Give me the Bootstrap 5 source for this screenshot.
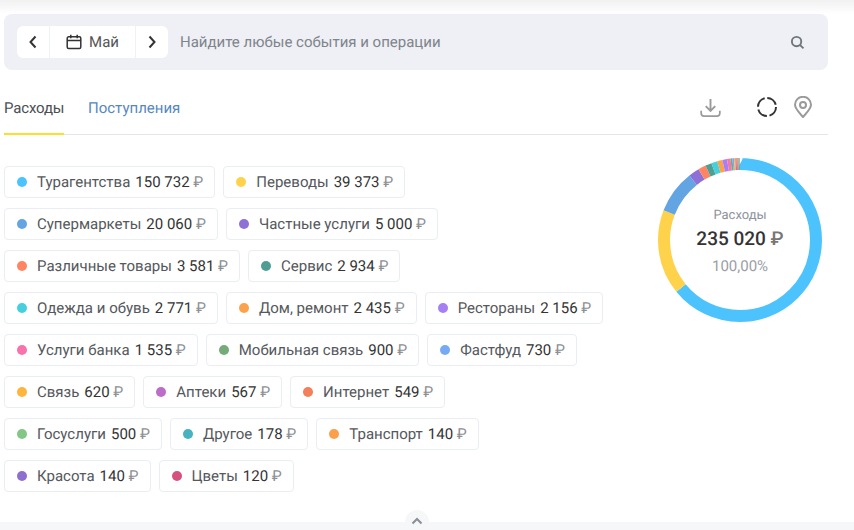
<!DOCTYPE html>
<html lang="ru">
<head>
<meta charset="utf-8">
<title>Расходы</title>
<link href="https://cdn.jsdelivr.net/npm/bootstrap@5.3.0/dist/css/bootstrap.min.css" rel="stylesheet">
<style>
html,body{height:530px;overflow:hidden;background:#fff;}
body{font-family:Roboto,"Liberation Sans",sans-serif;font-size:15px;color:#333;text-rendering:geometricPrecision;font-kerning:normal;}
.top-fade{height:14px;background:linear-gradient(#f1f1f2,#fff);}
.page-wrap{padding:0 26px 0 4px;}
.search-bar{height:56px;background:#eef0f5;border-radius:8px;padding:0 13px;}
.month-group{height:32px;background:#fff;border-radius:6px;width:151px;flex:none;}
.month-arrow{width:32px;height:32px;padding:0;border:0;background:none;color:#333;}
.month-name{width:87px;height:32px;border-left:1px solid #f0f1f4;border-right:1px solid #f0f1f4;color:#555;gap:7px;}
.search-text{margin-left:12px;color:#80848b;font-size:15px;}
.search-ico{margin-right:10px;}
.tab-row{height:65px;border-bottom:1px solid #e5e5e5;margin-bottom:31px;}
.tab-item{height:65px;line-height:77px;text-decoration:none;color:#4b4f54;font-size:15px;position:relative;}
.tab-active{width:60px;border-bottom:2px solid #ffdd2d;margin-right:24px;height:65px;letter-spacing:-.15px;}
.tab-link{color:#5688c0;}
.tool-set{padding-top:10px;}
.ico-dl{margin-right:35px;}
.ico-ring{margin-right:15px;}
.ico-pin{margin-right:15px;}
.chip-area{width:603px;gap:10px 8px;align-content:flex-start;flex:none;}
.chip-item{height:32px;padding:0 11px 0 12px;border:1px solid #e9edf4;border-radius:4px;background:#fff;white-space:nowrap;color:#55585c;gap:10px;}
.chip-dot{width:10px;height:10px;border-radius:50%;flex:none;}
.chip-sum{color:#333;margin-left:5px;font-weight:400;}
.rub{color:#8d9094;}
.donut-box{width:164px;height:164px;margin:-8px 0 0 51px;flex:none;}
.donut-box svg{display:block;}
.donut-center{position:absolute;inset:0;text-align:center;}
.donut-label{font-size:13px;color:#8e939b;line-height:16px;margin-top:50px;}
.donut-sum{font-size:19px;font-weight:500;color:#333;line-height:24px;margin-top:3px;}
.donut-sum span{color:#777;}
.donut-pct{font-size:15px;color:#9a9ea5;line-height:18px;margin-top:6px;}
.bottom-strip{height:8px;background:#f6f7f8;margin-top:30px;position:relative;}
.bump{position:absolute;left:405px;top:-12px;width:24px;height:24px;border-radius:50%;background:#f6f7f8;}
.bump svg{display:block;margin:7px auto 0;}
</style>
</head>
<body>
<div class="top-fade"></div>
<div class="page-wrap">
  <div class="search-bar d-flex align-items-center">
    <div class="month-group d-flex align-items-center">
      <button class="month-arrow d-flex align-items-center justify-content-center" type="button" aria-label="Назад">
        <svg width="10" height="14" viewBox="0 0 10 14"><path d="M7.5 1.5 2.5 7l5 5.5" fill="none" stroke="#333" stroke-width="2"/></svg>
      </button>
      <div class="month-name d-flex align-items-center justify-content-center">
        <svg width="16" height="16" viewBox="0 0 16 16" fill="none" stroke="#333" stroke-width="1.5"><rect x="1.2" y="2.8" width="13.6" height="11.6" rx="1.5"/><path d="M1.2 6.6h13.6M4.8 .8v3.4M11.2 .8v3.4"/></svg>
        <span>Май</span>
      </div>
      <button class="month-arrow d-flex align-items-center justify-content-center" type="button" aria-label="Вперёд">
        <svg width="10" height="14" viewBox="0 0 10 14"><path d="M2.5 1.5 7.5 7l-5 5.5" fill="none" stroke="#333" stroke-width="2"/></svg>
      </button>
    </div>
    <div class="search-text flex-grow-1">Найдите любые события и операции</div>
    <svg class="search-ico" width="15" height="15" viewBox="0 0 16 16" fill="none" stroke="#70757d" stroke-width="2"><circle cx="7" cy="7" r="5"/><path d="m10.800 10.800 3.600 3.400"/></svg>
  </div>

  <div class="tab-row d-flex justify-content-between">
    <div class="d-flex">
      <a class="tab-item tab-active" href="#">Расходы</a>
      <a class="tab-item tab-link" href="#">Поступления</a>
    </div>
    <div class="tool-set d-flex align-items-center">
      <svg class="ico-dl" width="21" height="19" viewBox="0 0 22 20" fill="none" stroke="#9a9a9a" stroke-width="2"><path d="M11 1v12M6 8.500l5 5 5-5"/><path d="M1.200 13.500v2.500a3 3 0 0 0 3 3h13.600a3 3 0 0 0 3-3v-2.500" stroke-width="1.800"/></svg>
      <svg class="ico-ring" width="22" height="22" viewBox="0 0 22 22" fill="none" stroke="#333" stroke-width="2"><circle cx="11" cy="11" r="9" stroke-dasharray="11.500 2.640"/></svg>
      <svg class="ico-pin" width="20" height="22" viewBox="0 0 20 22" fill="none" stroke="#9a9a9a" stroke-width="2"><path d="M10 21C5.500 16 2 12.700 2 8.800A8 8 0 0 1 18 8.800C18 12.700 14.500 16 10 21Z"/><circle cx="10" cy="9" r="3"/></svg>
    </div>
  </div>

  <div class="d-flex">
    <div class="chip-area d-flex flex-wrap">
      <div class="chip-item d-flex align-items-center"><i class="chip-dot" style="background:#4cc3fc"></i><span>Турагентства<span class="chip-sum">150 732 <span class="rub">₽</span></span></span></div>
      <div class="chip-item d-flex align-items-center"><i class="chip-dot" style="background:#ffd24c"></i><span>Переводы<span class="chip-sum">39 373 <span class="rub">₽</span></span></span></div>
      <div class="chip-item d-flex align-items-center"><i class="chip-dot" style="background:#62a5e2"></i><span>Супермаркеты<span class="chip-sum">20 060 <span class="rub">₽</span></span></span></div>
      <div class="chip-item d-flex align-items-center"><i class="chip-dot" style="background:#8f70d6"></i><span>Частные услуги<span class="chip-sum">5 000 <span class="rub">₽</span></span></span></div>
      <div class="chip-item d-flex align-items-center"><i class="chip-dot" style="background:#ff8562"></i><span>Различные товары<span class="chip-sum">3 581 <span class="rub">₽</span></span></span></div>
      <div class="chip-item d-flex align-items-center"><i class="chip-dot" style="background:#4e9e94"></i><span>Сервис<span class="chip-sum">2 934 <span class="rub">₽</span></span></span></div>
      <div class="chip-item d-flex align-items-center"><i class="chip-dot" style="background:#46d0dd"></i><span>Одежда и обувь<span class="chip-sum">2 771 <span class="rub">₽</span></span></span></div>
      <div class="chip-item d-flex align-items-center"><i class="chip-dot" style="background:#fba24b"></i><span>Дом, ремонт<span class="chip-sum">2 435 <span class="rub">₽</span></span></span></div>
      <div class="chip-item d-flex align-items-center"><i class="chip-dot" style="background:#a67ff5"></i><span>Рестораны<span class="chip-sum">2 156 <span class="rub">₽</span></span></span></div>
      <div class="chip-item d-flex align-items-center"><i class="chip-dot" style="background:#f873ab"></i><span>Услуги банка<span class="chip-sum">1 535 <span class="rub">₽</span></span></span></div>
      <div class="chip-item d-flex align-items-center"><i class="chip-dot" style="background:#74ab78"></i><span>Мобильная связь<span class="chip-sum">900 <span class="rub">₽</span></span></span></div>
      <div class="chip-item d-flex align-items-center"><i class="chip-dot" style="background:#76aaf5"></i><span>Фастфуд<span class="chip-sum">730 <span class="rub">₽</span></span></span></div>
      <div class="chip-item d-flex align-items-center"><i class="chip-dot" style="background:#fdb53e"></i><span>Связь<span class="chip-sum">620 <span class="rub">₽</span></span></span></div>
      <div class="chip-item d-flex align-items-center"><i class="chip-dot" style="background:#bd6cca"></i><span>Аптеки<span class="chip-sum">567 <span class="rub">₽</span></span></span></div>
      <div class="chip-item d-flex align-items-center"><i class="chip-dot" style="background:#f47f5b"></i><span>Интернет<span class="chip-sum">549 <span class="rub">₽</span></span></span></div>
      <div class="chip-item d-flex align-items-center"><i class="chip-dot" style="background:#82c785"></i><span>Госуслуги<span class="chip-sum">500 <span class="rub">₽</span></span></span></div>
      <div class="chip-item d-flex align-items-center"><i class="chip-dot" style="background:#47b3c0"></i><span>Другое<span class="chip-sum">178 <span class="rub">₽</span></span></span></div>
      <div class="chip-item d-flex align-items-center"><i class="chip-dot" style="background:#fb9f4a"></i><span>Транспорт<span class="chip-sum">140 <span class="rub">₽</span></span></span></div>
      <div class="chip-item d-flex align-items-center"><i class="chip-dot" style="background:#8e6fd0"></i><span>Красота<span class="chip-sum">140 <span class="rub">₽</span></span></span></div>
      <div class="chip-item d-flex align-items-center"><i class="chip-dot" style="background:#d5527f"></i><span>Цветы<span class="chip-sum">120 <span class="rub">₽</span></span></span></div>
    </div>
    <div class="donut-box position-relative">
      <svg id="ring" width="164" height="164" viewBox="0 0 164 164"></svg>
      <div class="donut-center">
        <div class="donut-label">Расходы</div>
        <div class="donut-sum">235 020 <span>₽</span></div>
        <div class="donut-pct">100,00%</div>
      </div>
    </div>
  </div>
</div>
<div class="bottom-strip">
  <div class="bump"><svg width="12" height="8" viewBox="0 0 12 8"><path d="M1.500 6.500 6 2l4.500 4.500" fill="none" stroke="#8b8f96" stroke-width="2"/></svg></div>
</div>
<script>
var data=[[150732,'#4cc3fc'],[39373,'#ffd24c'],[20060,'#62a5e2'],[5000,'#8f70d6'],[3581,'#ff8562'],[2934,'#4e9e94'],[2771,'#46d0dd'],[2435,'#fba24b'],[2156,'#a67ff5'],[1535,'#f873ab'],[900,'#74ab78'],[730,'#76aaf5'],[620,'#fdb53e'],[567,'#bd6cca'],[549,'#f47f5b'],[500,'#82c785'],[178,'#47b3c0'],[140,'#fb9f4a'],[140,'#8e6fd0'],[120,'#d5527f']];
var total=235020,start=0,svg=document.getElementById('ring'),ns='http://www.w3.org/2000/svg';
data.forEach(function(d){
  var c=document.createElementNS(ns,'circle');
  c.setAttribute('cx','82');c.setAttribute('cy','82');c.setAttribute('r','76');
  c.setAttribute('fill','none');c.setAttribute('stroke',d[1]);c.setAttribute('stroke-width','12');
  c.setAttribute('pathLength',total);
  c.setAttribute('stroke-dasharray',d[0]+' '+(total-d[0]));
  c.setAttribute('stroke-dashoffset',-start);
  c.setAttribute('transform','rotate(-90 82 82)');
  svg.appendChild(c);
  start+=d[0];
});
</script>
<script src="https://cdn.jsdelivr.net/npm/bootstrap@5.3.0/dist/js/bootstrap.bundle.min.js"></script>
</body>
</html>
